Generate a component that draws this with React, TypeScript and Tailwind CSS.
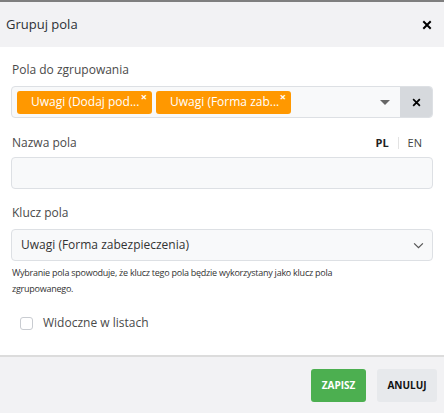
import React from 'react';

const font = { fontFamily: '"Open Sans", "Noto Sans", sans-serif' };

function CloseIcon({ className }: { className?: string }) {
  return (
    <svg viewBox="0 0 10 10" className={className} fill="none" stroke="currentColor" strokeWidth="2" strokeLinecap="square">
      <path d="M2 2 L8 8 M8 2 L2 8" />
    </svg>
  );
}

function Tag({ label }: { label: string }) {
  return (
    <div className="relative flex h-[23px] w-[135px] items-center rounded-[3px] bg-[#ff9800] pl-[14px] text-[12px] text-white">
      {label}
      <span className="absolute right-[5px] top-[-1px] text-[11px] font-bold leading-[14px]">×</span>
    </div>
  );
}

export default function App() {
  return (
    <div className="flex h-[413px] w-[444px] flex-col bg-white" style={font}>
      <div className="h-[2px] bg-[#7f7f7f]" />
      <div className="flex h-[45px] items-center justify-between bg-[#f2f2f4] pl-[6px] pr-[12px]">
        <span className="text-[13px] text-[#2b3036]">Grupuj pola</span>
        <CloseIcon className="h-[10px] w-[10px] text-black" />
      </div>

      <div className="flex flex-1 flex-col px-[11px] pt-[14px]">
        <label className="h-[18px] pl-[1px] text-[12px] leading-[18px] text-[#4a4a4a]">Pola do zgrupowania</label>
        <div className="mt-[7px] flex h-[32px] items-stretch overflow-hidden rounded-[4px] border border-[#dde0e4] bg-[#f8f9fa]">
          <div className="flex flex-1 items-center gap-[4px] pl-[5px]">
            <Tag label="Uwagi (Dodaj pod..." />
            <Tag label="Uwagi (Forma zab..." />
            <div className="ml-auto mr-[10px] h-0 w-0 border-x-[5px] border-t-[5px] border-x-transparent border-t-[#666]" />
          </div>
          <div className="flex w-[32px] items-center justify-center bg-[#d6d9dd]">
            <CloseIcon className="h-[9px] w-[9px] text-black" />
          </div>
        </div>

        <div className="mt-[16px] flex h-[18px] items-center justify-between">
          <label className="pl-[1px] text-[12px] text-[#4a4a4a]">Nazwa pola</label>
          <div className="flex items-center pr-[11px] text-[11px]">
            <span className="font-bold text-[#222]">PL</span>
            <span className="mx-[9px] h-[12px] w-px bg-[#e3e3e3]" />
            <span className="text-[#444]">EN</span>
          </div>
        </div>
        <div className="mt-[5px] h-[32px] rounded-[4px] border border-[#dde0e4] bg-[#f8f9fa]" />

        <label className="mt-[15px] h-[18px] pl-[1px] text-[12px] leading-[18px] text-[#4a4a4a]">Klucz pola</label>
        <div className="mt-[7px] flex h-[32px] items-center justify-between rounded-[4px] border border-[#dde0e4] bg-[#f8f9fa] pl-[9px] pr-[8px]">
          <span className="text-[12px] text-[#333]">Uwagi (Forma zabezpieczenia)</span>
          <svg viewBox="0 0 12 8" className="h-[7px] w-[11px] text-[#555]" fill="none" stroke="currentColor" strokeWidth="1.4">
            <path d="M1 1.5 L6 6.5 L11 1.5" />
          </svg>
        </div>
        <p className="mt-[4px] whitespace-nowrap pl-[1px] text-[9px] leading-[16px] tracking-[-0.25px] text-[#333]">
          Wybranie pola spowoduje, że klucz tego pola będzie wykorzystany jako klucz pola
          <br />
          zgrupowanego.
        </p>

        <label className="mt-[17px] flex items-center gap-[10px] pl-[9px]">
          <span className="h-[13px] w-[13px] rounded-[3px] border border-[#c9ccd1] bg-white" />
          <span className="text-[12px] text-[#4a4a4a]">Widoczne w listach</span>
        </label>
      </div>

      <div className="flex h-[58px] items-center justify-end gap-[11px] border-t-2 border-[#dcdcdc] bg-[#f2f2f4] pr-[7px]">
        <button className="h-[33px] w-[55px] rounded-[3px] bg-[#4caf50] text-[10px] font-bold text-white">ZAPISZ</button>
        <button className="h-[33px] w-[60px] rounded-[3px] bg-[#e7e9ec] text-[10px] font-bold text-[#111]">ANULUJ</button>
      </div>
    </div>
  );
}
